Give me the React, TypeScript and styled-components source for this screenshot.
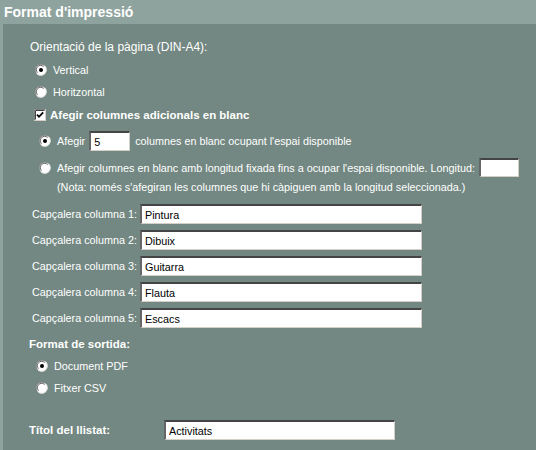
import React from "react";
import styled, { createGlobalStyle } from "styled-components";

const Global = createGlobalStyle`
  html, body { margin: 0; padding: 0; background: #8fa39e; }
  body { font-family: "Liberation Sans", Arial, Helvetica, sans-serif; color: #ffffff; }
`;

const Page = styled.div`
  display: flex;
  flex-direction: column;
  min-height: 100vh;
`;

const Header = styled.h1`
  margin: 0;
  height: 24px;
  line-height: 24px;
  padding-left: 4px;
  font-size: 14px;
  font-weight: bold;
  color: #ffffff;
`;

const Panel = styled.form`
  flex: 1;
  margin: 0 0 0 3px;
  background: #738882;
  padding-top: 12px;
  display: flex;
  flex-direction: column;
`;

const Row = styled.div<{ $h?: number; $mt?: number; $pl: number }>`
  display: flex;
  align-items: center;
  height: ${(p) => p.$h ?? 22}px;
  margin-top: ${(p) => p.$mt ?? 0}px;
  padding-left: ${(p) => p.$pl}px;
  white-space: nowrap;
`;

const Heading = styled.span<{ $w?: number; $ml?: number; $light?: boolean }>`
  font-weight: ${(p) => (p.$light ? "normal" : "bold")};
  font-size: ${(p) => (p.$light ? 12 : 11.5)}px;
  margin-left: ${(p) => p.$ml ?? 0}px;
  ${(p) => (p.$w ? `width: ${p.$w}px; flex: none;` : "")}
`;

const Text = styled.span<{ $ml?: number; $mr?: number; $w?: number }>`
  font-size: 10.8px;
  margin-left: ${(p) => p.$ml ?? 0}px;
  margin-right: ${(p) => p.$mr ?? 0}px;
  ${(p) => (p.$w ? `width: ${p.$w}px; flex: none;` : "")}
`;

const Field = styled.input<{ $w: number; $h?: number }>`
  box-sizing: border-box;
  width: ${(p) => p.$w}px;
  height: ${(p) => p.$h ?? 20}px;
  flex: none;
  margin: 0;
  padding: 0 0 0 3px;
  background: #ffffff;
  border-style: solid;
  border-width: 2px 1px 1px 2px;
  border-color: #444444 #d4d0c8 #d4d0c8 #666666;
  font-family: "Liberation Sans", Arial, sans-serif;
  font-size: 10.8px;
  color: #000000;
  outline: none;
`;

const IconBox = styled.svg`
  flex: none;
  display: block;
`;

function Radio({ checked }: { checked?: boolean }) {
  return (
    <IconBox width="12" height="12" viewBox="0 0 12 12">
      <circle cx="6" cy="6" r="5.5" fill="#ffffff" />
      <path d="M1.6 9.6 A5.3 5.3 0 0 1 9.6 1.6" stroke="#8a8a8a" strokeWidth="1" fill="none" />
      <path d="M2.6 8.6 A4 4 0 0 1 8.6 2.6" stroke="#404040" strokeWidth="0.8" fill="none" />
      <path d="M9.6 1.6 A5.3 5.3 0 0 1 1.6 9.6" stroke="#e4e2dc" strokeWidth="1" fill="none" />
      {checked && <circle cx="6" cy="6" r="2" fill="#000000" />}
    </IconBox>
  );
}

function Check() {
  return (
    <IconBox width="12" height="12" viewBox="0 0 12 12">
      <rect x="0" y="0" width="12" height="12" fill="#ffffff" />
      <path d="M0.5 11.5 V0.5 H11.5" stroke="#808080" fill="none" />
      <path d="M1.5 10.5 V1.5 H10.5" stroke="#404040" fill="none" />
      <path d="M11.5 0.5 V11.5 H0.5" stroke="#d4d0c8" fill="none" />
      <path d="M3 5.6 L5 7.8 L9.2 3.4" stroke="#000000" strokeWidth="1.8" fill="none" />
    </IconBox>
  );
}

const columns = ["Pintura", "Dibuix", "Guitarra", "Flauta", "Escacs"];

export default function App() {
  return (
    <Page>
      <Global />
      <Header>Format d'impressió</Header>
      <Panel onSubmit={(e) => e.preventDefault()}>
        <Row $pl={27}>
          <Heading $light>Orientació de la pàgina (DIN-A4):</Heading>
        </Row>
        <Row $pl={32} $mt={1}>
          <Radio checked />
          <Text $ml={6}>Vertical</Text>
        </Row>
        <Row $pl={32}>
          <Radio />
          <Text $ml={6}>Horitzontal</Text>
        </Row>
        <Row $pl={31} $mt={1}>
          <Check />
          <Heading $ml={4}>Afegir columnes adicionals en blanc</Heading>
        </Row>
        <Row $pl={36} $mt={4}>
          <Radio checked />
          <Text $ml={6} $mr={4}>Afegir</Text>
          <Field $w={41} defaultValue="5" />
          <Text $ml={5}>columnes en blanc ocupant l'espai disponible</Text>
        </Row>
        <Row $pl={36} $mt={5} $h={21}>
          <Radio />
          <Text $ml={6} $mr={4}>
            Afegir columnes en blanc amb longitud fixada fins a ocupar l'espai disponible. Longitud:
          </Text>
          <Field $w={40} $h={19} defaultValue="" />
        </Row>
        <Row $pl={54} $h={18}>
          <Text>(Nota: només s'afegiran les columnes que hi càpiguen amb la longitud seleccionada.)</Text>
        </Row>
        {columns.map((c, i) => (
          <Row key={c} $pl={29} $mt={i === 0 ? 7 : 4}>
            <Text $w={108}>Capçalera columna {i + 1}:</Text>
            <Field $w={282} defaultValue={c} />
          </Row>
        ))}
        <Row $pl={26} $mt={4}>
          <Heading>Format de sortida:</Heading>
        </Row>
        <Row $pl={33}>
          <Radio checked />
          <Text $ml={6}>Document PDF</Text>
        </Row>
        <Row $pl={33}>
          <Radio />
          <Text $ml={6}>Fitxer CSV</Text>
        </Row>
        <Row $pl={26} $mt={20}>
          <Heading $w={135}>Títol del llistat:</Heading>
          <Field $w={231} defaultValue="Activitats" />
        </Row>
      </Panel>
    </Page>
  );
}
